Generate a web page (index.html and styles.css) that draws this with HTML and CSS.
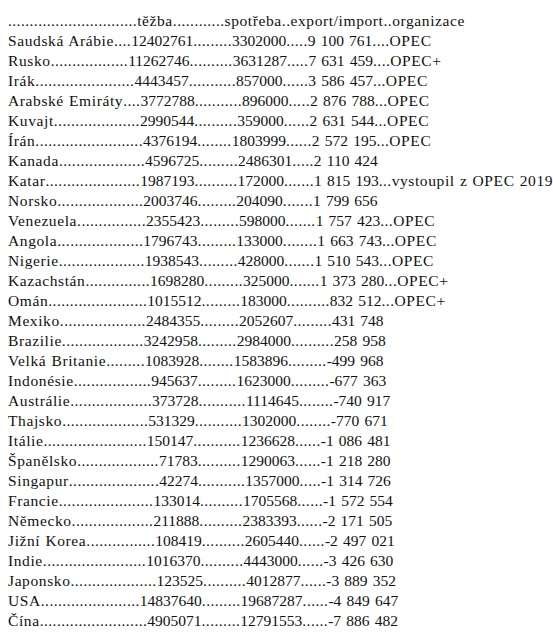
FILE: index.html
```html
<!DOCTYPE html>
<html lang="cs">
<head>
<meta charset="utf-8">
<title>Ropa</title>
<link rel="stylesheet" href="styles.css">
</head>
<body>
<div class="list">
<div class="row">..............................<span class="w">těžba</span>............<span class="w">spotřeba</span>..<span class="w">export/import</span>..<span class="w">organizace</span></div>
<div class="row"><span class="w">Saudská Arábie</span>....<span class="n">12402761</span>.........<span class="n">3302000</span>.....<span class="n">9 100 761</span>....<span class="w">OPEC</span></div>
<div class="row"><span class="w">Rusko</span>..................<span class="n">11262746</span>..........<span class="n">3631287</span>.....<span class="n">7 631 459</span>....<span class="w">OPEC+</span></div>
<div class="row"><span class="w">Irák</span>.......................<span class="n">4443457</span>...........<span class="n">857000</span>......<span class="n">3 586 457</span>...<span class="w">OPEC</span></div>
<div class="row"><span class="w">Arabské Emiráty</span>....<span class="n">3772788</span>...........<span class="n">896000</span>.....<span class="n">2 876 788</span>...<span class="w">OPEC</span></div>
<div class="row"><span class="w">Kuvajt</span>....................<span class="n">2990544</span>..........<span class="n">359000</span>......<span class="n">2 631 544</span>...<span class="w">OPEC</span></div>
<div class="row"><span class="w">Írán</span>.........................<span class="n">4376194</span>........<span class="n">1803999</span>......<span class="n">2 572 195</span>...<span class="w">OPEC</span></div>
<div class="row"><span class="w">Kanada</span>....................<span class="n">4596725</span>.........<span class="n">2486301</span>.....<span class="n">2 110 424</span></div>
<div class="row"><span class="w">Katar</span>......................<span class="n">1987193</span>..........<span class="n">172000</span>.......<span class="n">1 815 193</span>...<span class="w">vystoupil z OPEC 2019</span></div>
<div class="row"><span class="w">Norsko</span>....................<span class="n">2003746</span>.........<span class="n">204090</span>.......<span class="n">1 799 656</span></div>
<div class="row"><span class="w">Venezuela</span>................<span class="n">2355423</span>.........<span class="n">598000</span>.......<span class="n">1 757 423</span>...<span class="w">OPEC</span></div>
<div class="row"><span class="w">Angola</span>....................<span class="n">1796743</span>.........<span class="n">133000</span>........<span class="n">1 663 743</span>...<span class="w">OPEC</span></div>
<div class="row"><span class="w">Nigerie</span>....................<span class="n">1938543</span>.........<span class="n">428000</span>.......<span class="n">1 510 543</span>...<span class="w">OPEC</span></div>
<div class="row"><span class="w">Kazachstán</span>...............<span class="n">1698280</span>.........<span class="n">325000</span>.......<span class="n">1 373 280</span>...<span class="w">OPEC+</span></div>
<div class="row"><span class="w">Omán</span>.......................<span class="n">1015512</span>.........<span class="n">183000</span>..........<span class="n">832 512</span>...<span class="w">OPEC+</span></div>
<div class="row"><span class="w">Mexiko</span>....................<span class="n">2484355</span>.........<span class="n">2052607</span>.........<span class="n">431 748</span></div>
<div class="row"><span class="w">Brazilie</span>...................<span class="n">3242958</span>.........<span class="n">2984000</span>..........<span class="n">258 958</span></div>
<div class="row"><span class="w">Velká Britanie</span>.........<span class="n">1083928</span>........<span class="n">1583896</span>.........<span class="n">-499 968</span></div>
<div class="row"><span class="w">Indonésie</span>..................<span class="n">945637</span>.........<span class="n">1623000</span>.........<span class="n">-677 363</span></div>
<div class="row"><span class="w">Austrálie</span>...................<span class="n">373728</span>...........<span class="n">1114645</span>........<span class="n">-740 917</span></div>
<div class="row"><span class="w">Thajsko</span>....................<span class="n">531329</span>...........<span class="n">1302000</span>........<span class="n">-770 671</span></div>
<div class="row"><span class="w">Itálie</span>........................<span class="n">150147</span>...........<span class="n">1236628</span>......<span class="n">-1 086 481</span></div>
<div class="row"><span class="w">Španělsko</span>...................<span class="n">71783</span>..........<span class="n">1290063</span>......<span class="n">-1 218 280</span></div>
<div class="row"><span class="w">Singapur</span>.....................<span class="n">42274</span>...........<span class="n">1357000</span>.....<span class="n">-1 314 726</span></div>
<div class="row"><span class="w">Francie</span>......................<span class="n">133014</span>..........<span class="n">1705568</span>......<span class="n">-1 572 554</span></div>
<div class="row"><span class="w">Německo</span>...................<span class="n">211888</span>..........<span class="n">2383393</span>......<span class="n">-2 171 505</span></div>
<div class="row"><span class="w">Jižní Korea</span>................<span class="n">108419</span>..........<span class="n">2605440</span>......<span class="n">-2 497 021</span></div>
<div class="row"><span class="w">Indie</span>........................<span class="n">1016370</span>..........<span class="n">4443000</span>......<span class="n">-3 426 630</span></div>
<div class="row"><span class="w">Japonsko</span>....................<span class="n">123525</span>..........<span class="n">4012877</span>......<span class="n">-3 889 352</span></div>
<div class="row"><span class="w">USA</span>.......................<span class="n">14837640</span>.........<span class="n">19687287</span>......<span class="n">-4 849 647</span></div>
<div class="row"><span class="w">Čína</span>.........................<span class="n">4905071</span>.........<span class="n">12791553</span>......<span class="n">-7 886 482</span></div>
</div>
</body>
</html>
```

FILE: styles.css
```css
html, body {
  margin: 0;
  background: #ffffff;
}

body {
  color: #111111;
  font-family: "Liberation Serif", "Times New Roman", serif;
  font-size: 15.5px;
}

.list {
  padding: 11px 8px;
  white-space: nowrap;
  line-height: 20px;
  letter-spacing: 0.43px;
}

.row {
  height: 20px;
}

.w {
  letter-spacing: 0.6px;
  word-spacing: 0.7px;
}

.n {
  letter-spacing: 0;
  word-spacing: 1.3px;
}
```
